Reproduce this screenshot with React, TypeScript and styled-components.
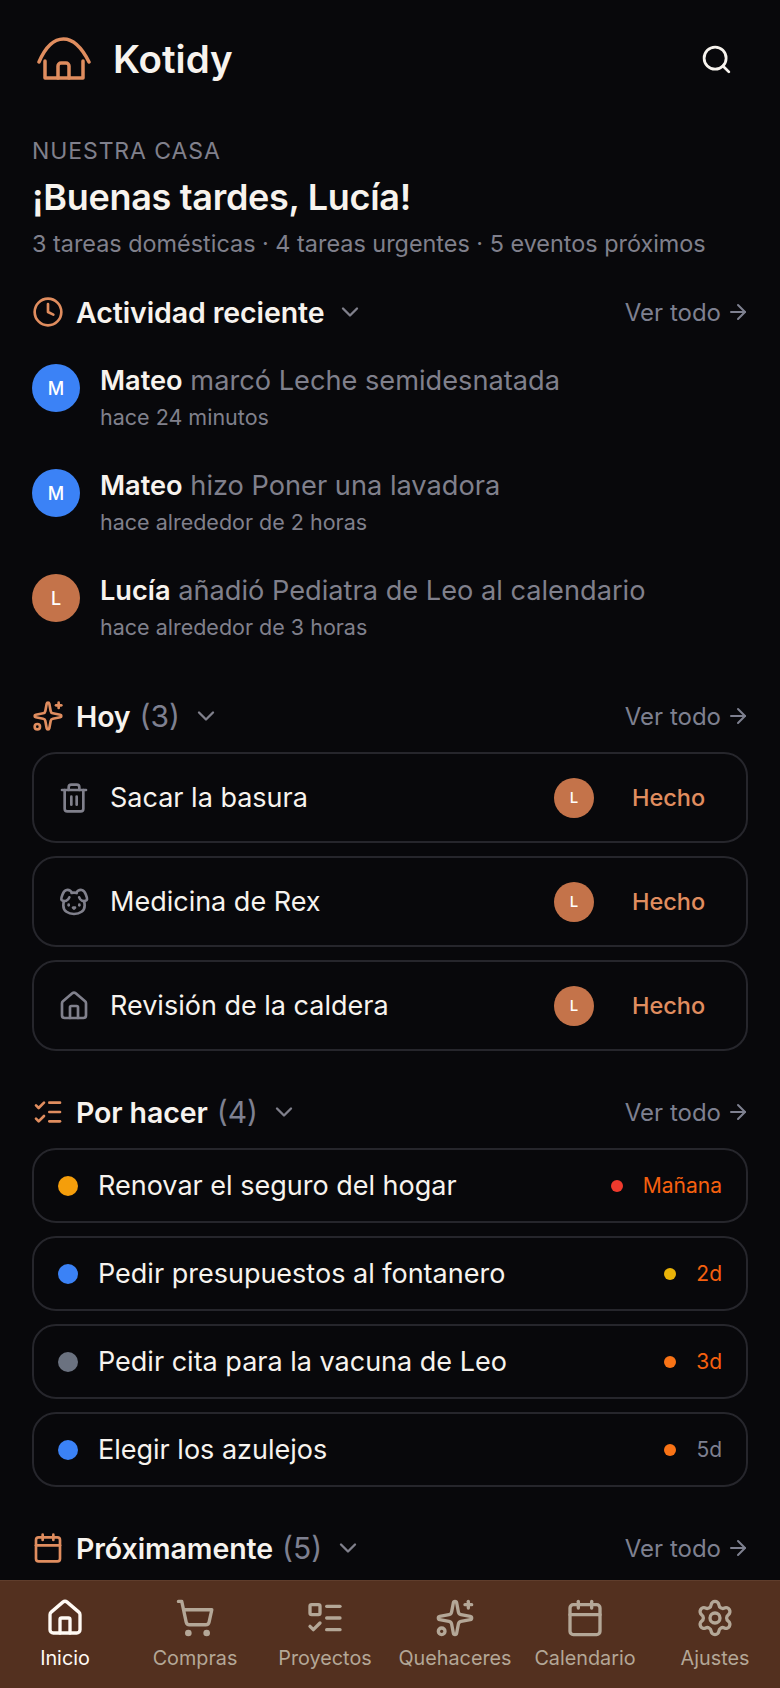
import React, { FunctionComponent, ReactNode } from "react";
import styled, { createGlobalStyle } from "styled-components";
import {
  ArrowRight,
  Calendar,
  ChevronDown,
  Clock,
  Dog,
  House,
  ListChecks,
  ListTodo,
  Search,
  Settings,
  ShoppingCart,
  Sparkles,
  Trash2,
} from "lucide-react";

const ACCENT = "#e08d5f";
const MUTED = "#80808c";
const TEXT = "#f7f3ee";

const GlobalStyle = createGlobalStyle`
  html, body {
    margin: 0;
    padding: 0;
    background: #08080b;
  }
  * {
    box-sizing: border-box;
  }
`;

const Screen = styled.div`
  width: 780px;
  height: 1688px;
  display: flex;
  flex-direction: column;
  overflow: hidden;
  background: #08080b;
  color: ${TEXT};
  font-family: "Inter", "Liberation Sans", sans-serif;
`;

const Main = styled.main`
  flex: 1;
  min-height: 0;
  overflow: hidden;
  padding: 0 32px;
`;

const Header = styled.header`
  height: 120px;
  display: flex;
  align-items: center;
  justify-content: space-between;
  padding: 0 15px 2px 5px;
`;

const Brand = styled.div`
  display: flex;
  align-items: center;
  gap: 22px;
`;

const BrandName = styled.span`
  font-size: 38.5px;
  font-weight: 600;
`;

const Eyebrow = styled.div`
  font-size: 23px;
  line-height: 28px;
  color: ${MUTED};
  letter-spacing: 0.9px;
  text-transform: uppercase;
  margin-top: 17px;
`;

const Greeting = styled.h1`
  margin: 10px 0 0;
  font-size: 36px;
  line-height: 44px;
  font-weight: 600;
  letter-spacing: -0.3px;
`;

const Summary = styled.p`
  margin: 10px 0 0;
  font-size: 23.4px;
  line-height: 30px;
  color: ${MUTED};
`;

const Section = styled.section<{ $top: number }>`
  margin-top: ${(p) => p.$top}px;
`;

const SectionHead = styled.div`
  height: 40px;
  display: flex;
  align-items: center;
  justify-content: space-between;
`;

const SectionTitle = styled.div`
  display: flex;
  align-items: center;
  gap: 12px;
`;

const SectionIcon = styled.span`
  width: 32px;
  height: 32px;
  display: flex;
  color: ${ACCENT};
`;

const SectionName = styled.h2`
  margin: 0;
  font-size: 28.5px;
  font-weight: 600;
  letter-spacing: -0.1px;
`;

const SectionCount = styled.span`
  font-size: 30px;
  color: #7e8090;
  margin-left: -3px;
`;

const Chevron = styled(ChevronDown)`
  color: ${MUTED};
`;

const SeeAll = styled.a`
  display: flex;
  align-items: center;
  gap: 5px;
  font-size: 24px;
  color: #7e8090;
  margin-right: -2px;
`;

const ActivityList = styled.div`
  margin-top: 32px;
  display: flex;
  flex-direction: column;
  gap: 39px;
`;

const ActivityRow = styled.div`
  display: flex;
  gap: 20px;
`;

const Avatar = styled.div<{ $size: number; $color: string }>`
  width: ${(p) => p.$size}px;
  height: ${(p) => p.$size}px;
  flex: none;
  border-radius: 50%;
  background: ${(p) => p.$color};
  display: flex;
  align-items: center;
  justify-content: center;
  font-size: ${(p) => (p.$size > 44 ? 18 : 15)}px;
  font-weight: 500;
  color: #fff;
`;

const ActivityText = styled.div`
  font-size: 27.2px;
  line-height: 34px;
  color: ${MUTED};
`;

const Who = styled.strong`
  color: ${TEXT};
  font-weight: 600;
`;

const ActivityTime = styled.div`
  font-size: 21.5px;
  line-height: 26px;
  margin-top: 6px;
  color: ${MUTED};
`;

const Cards = styled.div`
  margin-top: 16px;
  display: flex;
  flex-direction: column;
`;

const Card = styled.div<{ $height: number; $gap: number }>`
  height: ${(p) => p.$height}px;
  margin-bottom: ${(p) => p.$gap}px;
  border: 2px solid #26262c;
  border-radius: 24px;
  display: flex;
  align-items: center;
`;

const TaskIcon = styled.span`
  width: 32px;
  height: 32px;
  margin-left: 24px;
  color: ${MUTED};
  display: flex;
`;

const TaskName = styled.span`
  margin-left: 20px;
  flex: 1;
  font-size: 27px;
`;

const DoneButton = styled.span`
  width: 74px;
  margin: 0 40px 0 38px;
  font-size: 23.5px;
  font-weight: 500;
  color: ${ACCENT};
  white-space: nowrap;
`;

const PriorityDot = styled.span<{ $color: string }>`
  width: 20px;
  height: 20px;
  margin-left: 24px;
  border-radius: 50%;
  flex: none;
  background: ${(p) => p.$color};
`;

const TodoName = styled.span`
  margin-left: 20px;
  flex: 1;
  font-size: 27px;
`;

const DueDot = styled.span<{ $color: string }>`
  width: 12px;
  height: 12px;
  border-radius: 50%;
  background: ${(p) => p.$color};
  margin-right: 20px;
`;

const DueText = styled.span<{ $color: string }>`
  font-size: 21px;
  color: ${(p) => p.$color};
  margin-right: 24px;
`;

const Nav = styled.nav`
  flex: none;
  height: 108px;
  display: grid;
  grid-template-columns: repeat(6, 130px);
  background: #53301f;
  border-top: 1px solid #5f3d2c;
`;

const NavItem = styled.a<{ $active?: boolean }>`
  display: flex;
  flex-direction: column;
  align-items: center;
  padding-top: 17px;
  gap: 7px;
  font-size: 19.8px;
  line-height: 26px;
  color: ${(p) => (p.$active ? "#fffaf4" : "#b4a797")};
`;

const LogoIcon = () => (
  <svg width="54" height="44" viewBox="0 0 54 44" fill="none" stroke={ACCENT} strokeWidth="3.5" strokeLinecap="round" strokeLinejoin="round">
    <path d="M2 25C8 11 16 2 26.5 2S45 11 52 25" />
    <path d="M8 24v17h38V24" />
    <path d="M21 41V29a3 3 0 0 1 3-3h5a3 3 0 0 1 3 3v12" />
  </svg>
);

type HeadProps = { icon: ReactNode; title: string; count?: number };

const Head: FunctionComponent<HeadProps> = ({ icon, title, count }) => (
  <SectionHead>
    <SectionTitle>
      <SectionIcon>{icon}</SectionIcon>
      <SectionName>{title}</SectionName>
      {count !== undefined && <SectionCount>({count})</SectionCount>}
      <Chevron size={28} strokeWidth={2} />
    </SectionTitle>
    <SeeAll>
      Ver todo <ArrowRight size={24} strokeWidth={2} />
    </SeeAll>
  </SectionHead>
);

const activity = [
  { who: "Mateo", what: "marcó Leche semidesnatada", when: "hace 24 minutos", color: "#3b82f6" },
  { who: "Mateo", what: "hizo Poner una lavadora", when: "hace alrededor de 2 horas", color: "#3b82f6" },
  { who: "Lucía", what: "añadió Pediatra de Leo al calendario", when: "hace alrededor de 3 horas", color: "#c4734a" },
];

const today = [
  { name: "Sacar la basura", icon: <Trash2 size={32} strokeWidth={2} /> },
  { name: "Medicina de Rex", icon: <Dog size={32} strokeWidth={2} /> },
  { name: "Revisión de la caldera", icon: <House size={32} strokeWidth={2} /> },
];

const todos = [
  { name: "Renovar el seguro del hogar", dot: "#f59e0b", due: "Mañana", dueDot: "#ef3a2d", dueColor: "#f6600f" },
  { name: "Pedir presupuestos al fontanero", dot: "#3b82f6", due: "2d", dueDot: "#eab308", dueColor: "#f6600f" },
  { name: "Pedir cita para la vacuna de Leo", dot: "#6b7280", due: "3d", dueDot: "#f97316", dueColor: "#f6600f" },
  { name: "Elegir los azulejos", dot: "#3b82f6", due: "5d", dueDot: "#f97316", dueColor: "#7e8090" },
];

const nav = [
  { label: "Inicio", icon: House, active: true },
  { label: "Compras", icon: ShoppingCart },
  { label: "Proyectos", icon: ListTodo },
  { label: "Quehaceres", icon: Sparkles },
  { label: "Calendario", icon: Calendar },
  { label: "Ajustes", icon: Settings },
];

const App: FunctionComponent = () => {
  return (
    <>
      <GlobalStyle />
      <Screen>
        <Main>
          <Header>
            <Brand>
              <LogoIcon />
              <BrandName>Kotidy</BrandName>
            </Brand>
            <Search size={33} strokeWidth={2} />
          </Header>

          <Eyebrow>Nuestra casa</Eyebrow>
          <Greeting>¡Buenas tardes, Lucía!</Greeting>
          <Summary>3 tareas domésticas · 4 tareas urgentes · 5 eventos próximos</Summary>

          <Section $top={33}>
            <Head icon={<Clock size={32} strokeWidth={2} />} title="Actividad reciente" />
            <ActivityList>
              {activity.map((a) => (
                <ActivityRow key={a.what}>
                  <Avatar $size={48} $color={a.color}>{a.who[0]}</Avatar>
                  <div>
                    <ActivityText>
                      <Who>{a.who}</Who> {a.what}
                    </ActivityText>
                    <ActivityTime>{a.when}</ActivityTime>
                  </div>
                </ActivityRow>
              ))}
            </ActivityList>
          </Section>

          <Section $top={56}>
            <Head icon={<Sparkles size={32} strokeWidth={2} />} title="Hoy" count={3} />
            <Cards>
              {today.map((t) => (
                <Card key={t.name} $height={91} $gap={13}>
                  <TaskIcon>{t.icon}</TaskIcon>
                  <TaskName>{t.name}</TaskName>
                  <Avatar $size={40} $color="#c4734a">L</Avatar>
                  <DoneButton>Hecho</DoneButton>
                </Card>
              ))}
            </Cards>
          </Section>

          <Section $top={28}>
            <Head icon={<ListChecks size={32} strokeWidth={2} />} title="Por hacer" count={4} />
            <Cards>
              {todos.map((t) => (
                <Card key={t.name} $height={75} $gap={13}>
                  <PriorityDot $color={t.dot} />
                  <TodoName>{t.name}</TodoName>
                  <DueDot $color={t.dueDot} />
                  <DueText $color={t.dueColor}>{t.due}</DueText>
                </Card>
              ))}
            </Cards>
          </Section>

          <Section $top={28}>
            <Head icon={<Calendar size={32} strokeWidth={2} />} title="Próximamente" count={5} />
          </Section>
        </Main>

        <Nav>
          {nav.map((n) => (
            <NavItem key={n.label} $active={n.active}>
              <n.icon size={40} strokeWidth={2} />
              {n.label}
            </NavItem>
          ))}
        </Nav>
      </Screen>
    </>
  );
};

export default App;
